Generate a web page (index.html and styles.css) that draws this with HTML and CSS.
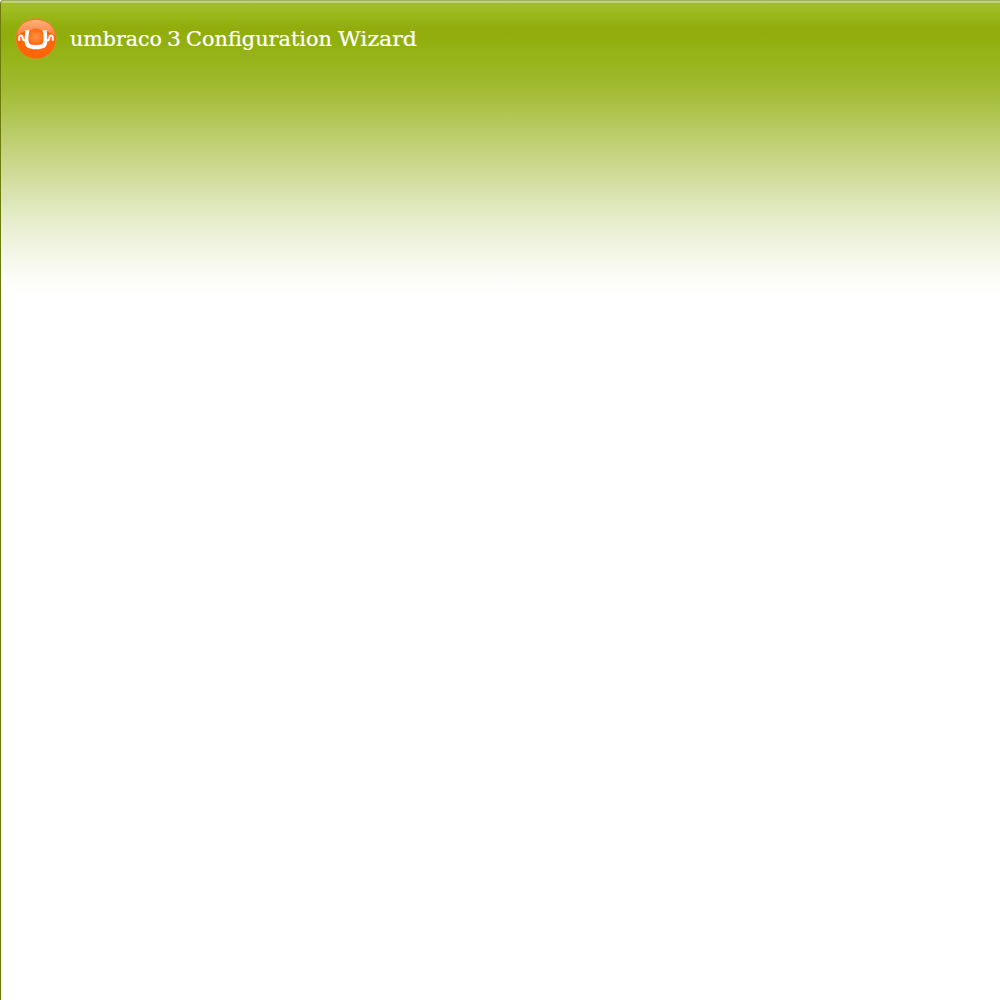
FILE: index.html
```html
<!DOCTYPE html>
<html lang="en">
<head>
<meta charset="utf-8">
<title>umbraco 3 Configuration Wizard</title>
<link rel="stylesheet" href="styles.css">
</head>
<body>
<main class="wizard">
  <header class="header">
    <svg class="logo" viewBox="0 0 42 42" aria-hidden="true">
      <defs>
        <linearGradient id="gloss" x1="0" y1="0" x2="0" y2="1">
          <stop offset="0" stop-color="#ffaf7c"/>
          <stop offset="1" stop-color="#ff8140"/>
        </linearGradient>
        <radialGradient id="glow">
          <stop offset="0" stop-color="#ff9349"/>
          <stop offset="1" stop-color="#ff690c"/>
        </radialGradient>
      </defs>
      <circle cx="21" cy="20.700" r="20.200" fill="#ff6608" stroke="#d79a3e" stroke-width=".6"/>
      <path d="M1.800 18C3 8 10.500 1.800 21 1.800S39 8 40.200 18C33 9.500 9 9.500 1.800 18Z" fill="url(#gloss)"/>
      <circle cx="21" cy="19" r="8.500" fill="url(#glow)"/>
      <path d="M10.200 12.300h4.300c-1.200 5-1.500 9.700-.5 12.500.8 1.800 2.700 2.200 7 2.200s6.200-.4 7-2.200c1-2.800.7-7.500-.5-12.500h4.300c-.3 2.800 1 8 .5 12-.6 5-3.500 7-11.300 7s-10.700-2-11.300-7c-.5-4 .8-9.200.5-12Z" fill="#fff"/>
      <path d="M11 22.300H9.200c-1.800 0-1.200-1.600-1.700-3.500-.4-1.700-3.100-1.800-3.300.4v3.500M31 22.300h1.800c1.800 0 1.200-1.600 1.700-3.500.4-1.700 3.100-1.800 3.300.4v3.500" fill="none" stroke="#fff" stroke-width="2"/>
    </svg>
    <h1 class="title"><svg class="title-art" viewBox="0 0 360 32"><text class="title-text" y="22"><tspan x="1" textLength="92" lengthAdjust="spacingAndGlyphs">umbraco</tspan> <tspan x="98" textLength="14" lengthAdjust="spacingAndGlyphs">3</tspan> <tspan x="117" textLength="146" lengthAdjust="spacingAndGlyphs">Configuration</tspan> <tspan x="269" textLength="79" lengthAdjust="spacingAndGlyphs">Wizard</tspan></text></svg></h1>
  </header>
</main>
</body>
</html>
```
FILE: styles.css
```css
body {
  margin: 0;
  background: #fff;
}

.wizard {
  box-sizing: border-box;
  height: 1000px;
  overflow: hidden;
  border-left: 1px solid #6d7b0c;
  border-top-left-radius: 4px;
  background:
    linear-gradient(#a0b162 0 1px, #bfd079 1px 3px, transparent 3px) no-repeat,
    linear-gradient(#a2bf24 0, #a0bd22 8px, #90ad0c 28px, #91ae0e 38px, #97b41b 60px, #a2bb32 90px, #b2c757 120px, #c5d37f 153px, #d5dfa4 185px, #e4ebc7 215px, #f2f5e4 250px, #fcfdf9 280px, #fff 298px);
}

.header {
  display: flex;
  align-items: center;
  gap: 12px;
  padding: 18px 0 0 14px;
}

.logo {
  width: 42px;
  height: 42px;
}

.title {
  display: flex;
  margin: 0;
}

.title-art {
  width: 360px;
  height: 32px;
  padding-top: 2px;
}

.title-text {
  font: 400 20px "DejaVu Serif", serif;
  fill: #fff;
  stroke: #fff;
  stroke-width: .2px;
}
```
